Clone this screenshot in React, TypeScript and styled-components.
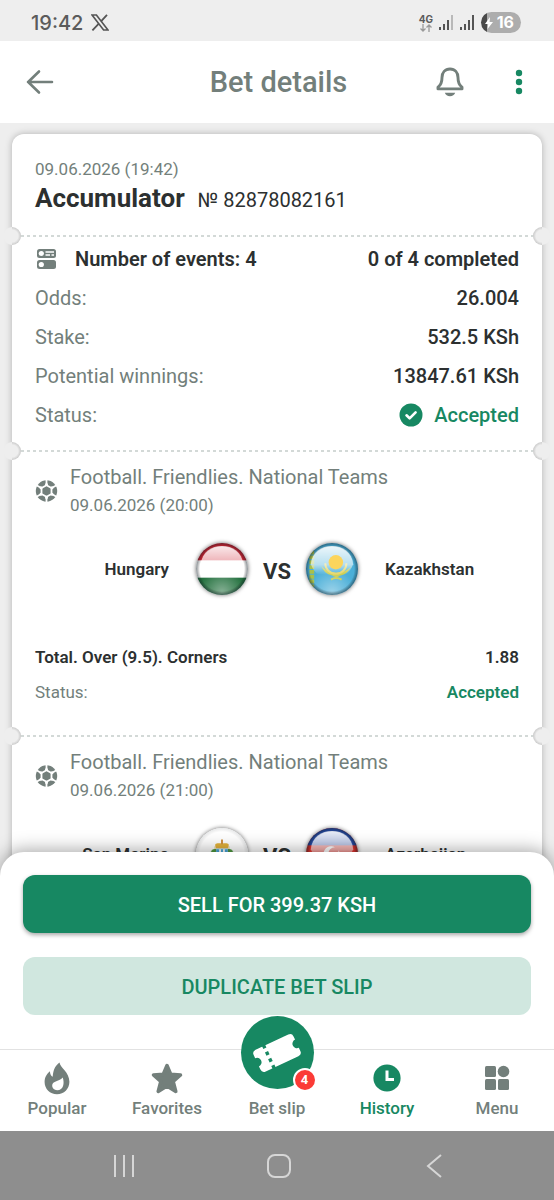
import React from 'react';
import styled, { createGlobalStyle } from 'styled-components';

const c = {
  green: '#178862',
  mint: '#d0e7df',
  grey: '#737f7b',
  ink: '#2c3030',
  page: '#eeeeee',
  line: '#d3d9d7',
};

const GlobalStyle = createGlobalStyle`
  *, *::before, *::after { box-sizing: border-box; }
  body { margin: 0; background: ${c.page}; font-family: Roboto, "Liberation Sans", sans-serif; color: ${c.ink}; }
  button { font: inherit; border: 0; padding: 0; background: none; color: inherit; cursor: pointer; }
  a { color: inherit; text-decoration: none; }
  h1, h2, p, dl, dd, dt { margin: 0; font: inherit; }
  svg { display: block; flex: none; }
`;

const Screen = styled.div`
  display: flex;
  flex-direction: column;
  height: 100vh;
  overflow: hidden;
`;

const StatusBar = styled.div`
  display: flex;
  align-items: center;
  justify-content: space-between;
  flex: none;
  height: 41px;
  padding: 4px 33px 0 31px;
  background: ${c.page};
  color: #5b5b5b;
`;

const StatusGroup = styled.div<{ $gap: number }>`
  display: flex;
  align-items: center;
  gap: ${(p) => p.$gap}px;
`;

const Clock = styled.span`
  font: 500 20px/24px Inter, Roboto, sans-serif;
`;

const Network = styled.span`
  display: flex;
  flex-direction: column;
  align-items: center;
  font: 700 10px/10px Inter, Roboto, sans-serif;
`;

const Battery = styled.span`
  display: flex;
  align-items: center;
  justify-content: flex-end;
  gap: 4px;
  width: 40px;
  height: 21px;
  padding-right: 7px;
  border-radius: 11px;
  background: linear-gradient(90deg, #4a4a4a 6px, #adadad 6px);
  color: #fff;
  font: 700 16px/21px Inter, Roboto, sans-serif;
`;

const Header = styled.header`
  display: grid;
  grid-template-columns: 1fr auto 1fr;
  align-items: center;
  flex: none;
  height: 82px;
  padding: 0 31px 0 26px;
  background: #fff;
  color: ${c.grey};
`;

const Title = styled.h1`
  font-size: 29px;
  line-height: 36px;
  font-weight: 500;
  padding-left: 8px;
`;

const HeaderActions = styled.div`
  display: flex;
  justify-content: flex-end;
  gap: 51px;
`;

const IconButton = styled.button`
  display: flex;
  align-items: center;
`;

const Scroll = styled.main`
  flex: 1 1 0;
  min-height: 0;
  overflow: hidden;
  padding: 11px 12px 0;
`;

const Ticket = styled.article`
  border-radius: 12px;
  background: #fff;
  box-shadow: 0 0 7px rgba(0, 0, 0, 0.26);
`;

const Section = styled.section<{ $pad: string }>`
  position: relative;
  padding: ${(p) => p.$pad};
  & + & {
    background: repeating-linear-gradient(90deg, ${c.line} 0 3px, transparent 3px 6px) 9px 0 / calc(100% - 18px) 2px no-repeat;
  }
`;

const Notch = styled.span<{ $side: 'left' | 'right' }>`
  position: absolute;
  top: -8px;
  ${(p) => p.$side}: -9px;
  width: 18px;
  height: 18px;
  border-radius: 50%;
  background:
    linear-gradient(${c.page}, ${c.page}) ${(p) => p.$side} / 9px 100% no-repeat,
    radial-gradient(circle, ${c.page} 6px, #c9c9c9 9px);
`;

const DateText = styled.p<{ $line: number }>`
  font-size: 17px;
  line-height: ${(p) => p.$line}px;
  color: ${c.grey};
`;

const BetHeading = styled.div`
  display: flex;
  align-items: baseline;
  gap: 13px;
  line-height: 34px;
`;

const BetType = styled.h2`
  font-size: 26px;
  font-weight: 700;
`;

const BetNumber = styled.p`
  font-size: 20px;
`;

const Rows = styled.dl``;

const Row = styled.div<{ $height: number; $size: number; $weight: number }>`
  display: flex;
  justify-content: space-between;
  align-items: center;
  height: ${(p) => p.$height}px;
  font-size: ${(p) => p.$size}px;
  --strong: ${(p) => p.$weight};
`;

const Label = styled.dt<{ $strong?: boolean }>`
  display: flex;
  align-items: center;
  gap: 17px;
  color: ${(p) => (p.$strong ? c.ink : c.grey)};
  font-weight: ${(p) => (p.$strong ? 'var(--strong)' : 400)};
`;

const Value = styled.dd<{ $accepted?: boolean }>`
  display: flex;
  align-items: center;
  gap: 11px;
  font-weight: var(--strong);
  color: ${(p) => (p.$accepted ? c.green : c.ink)};
`;

const EventHead = styled.div`
  display: flex;
  align-items: center;
  gap: 12px;
`;

const League = styled.h2`
  font-size: 20px;
  line-height: 28px;
  color: ${c.grey};
`;

const Match = styled.div`
  display: grid;
  grid-template-columns: 1fr auto 1fr;
  align-items: center;
  gap: 27px;
  height: 60px;
  margin: 20px 0 40px;
`;

const Team = styled.span<{ $home?: boolean }>`
  font-size: 17px;
  font-weight: 600;
  text-align: ${(p) => (p.$home ? 'right' : 'left')};
`;

const Versus = styled.div`
  display: flex;
  align-items: center;
  gap: 15px;
  font-size: 22px;
  font-weight: 700;
`;

const VersusText = styled.span`
  padding-top: 4px;
`;

const FlagDisc = styled.span`
  display: block;
  width: 52px;
  height: 52px;
  border-radius: 50%;
  overflow: hidden;
  box-shadow: 0 0 4px rgba(0, 0, 0, 0.6);
`;

const Sheet = styled.section`
  position: relative;
  flex: none;
  display: flex;
  flex-direction: column;
  gap: 24px;
  margin-top: -24px;
  padding: 23px 23px 34px;
  border-radius: 24px 24px 0 0;
  background: #fff;
  box-shadow: 0 -2px 18px rgba(0, 0, 0, 0.35);
`;

const Action = styled.button<{ $primary?: boolean }>`
  height: 58px;
  padding-top: 2px;
  border-radius: 12px;
  font-size: 20px;
  font-weight: 500;
  color: ${(p) => (p.$primary ? '#fff' : c.green)};
  background: ${(p) => (p.$primary ? c.green : c.mint)};
  box-shadow: ${(p) => (p.$primary ? '0 2px 4px rgba(0, 0, 0, 0.35)' : 'none')};
`;

const TabBar = styled.nav`
  position: relative;
  flex: none;
  display: grid;
  grid-template-columns: repeat(5, 1fr);
  grid-template-rows: minmax(0, 1fr);
  height: 82px;
  padding: 0 2px;
  border-top: 1px solid #e2e2e2;
  background: #fff;
`;

const Tab = styled.a<{ $active?: boolean }>`
  display: flex;
  flex-direction: column;
  align-items: center;
  justify-content: flex-end;
  gap: 2px;
  padding-bottom: 12px;
  font-size: 17px;
  line-height: 22px;
  font-weight: 500;
  color: ${(p) => (p.$active ? c.green : c.grey)};
`;

const TabIcon = styled.span`
  display: grid;
  place-items: center;
  height: 34px;
`;

const SlipDisc = styled.span`
  position: relative;
  display: grid;
  place-items: center;
  flex: none;
  width: 73px;
  height: 73px;
  margin-bottom: 6px;
  border-radius: 50%;
  background: ${c.green};
`;

const Badge = styled.span`
  position: absolute;
  right: -3px;
  bottom: -3px;
  width: 24px;
  height: 24px;
  border: 2px solid #fff;
  border-radius: 50%;
  background: #fb3b36;
  color: #fff;
  font-size: 13px;
  line-height: 20px;
  font-weight: 700;
  text-align: center;
`;

const SystemBar = styled.div`
  flex: none;
  display: flex;
  justify-content: space-between;
  align-items: center;
  height: 69px;
  padding: 0 112px;
  background: #8e8e8e;
`;

const Signal = ({ faded }: { faded?: boolean }) => (
  <svg width="15" height="16" viewBox="0 0 15 16" fill="#555">
    <rect x="0" y="12" width="2" height="3" />
    <rect x="4" y="9" width="2" height="6" />
    <rect x="8" y="5" width="2" height="10" />
    <rect x="12" y="0" width="2" height="15" opacity={faded ? 0.35 : 1} />
  </svg>
);

const XLogo = () => (
  <svg width="18" height="17" viewBox="0 0 18 17" fill="none" stroke="#555">
    <path d="M1 1h4.400L17 16h-4.400z" strokeWidth="1.700" />
    <path d="M16 .8 10 7.400M7.600 9.800 1.400 16.400" strokeWidth="1.800" />
  </svg>
);

const BackArrow = () => (
  <svg width="28" height="26" viewBox="0 0 28 26" fill="none" stroke={c.grey} strokeWidth="2.600" strokeLinecap="round" strokeLinejoin="round">
    <path d="M26 13H2M13 2.500 2.200 13 13 23.500" />
  </svg>
);

const Bell = () => (
  <svg width="28" height="30" viewBox="0 0 28 30" fill="none" stroke={c.grey} strokeWidth="2.900" strokeLinejoin="round">
    <path d="M14 2C9 2 6 5.700 6 10.500c0 4.500-.6 7.300-4 9.600v1.800h24v-1.800c-3.400-2.300-4-5.100-4-9.600C22 5.700 19 2 14 2z" />
    <path d="M8.800 25.800h10.400c-.9 2.300-2.600 3.500-5.200 3.500s-4.300-1.200-5.200-3.500z" fill={c.grey} stroke="none" />
  </svg>
);

const Dots = () => (
  <svg width="8" height="26" viewBox="0 0 8 26" fill={c.green}>
    <circle cx="4" cy="4" r="3.200" />
    <circle cx="4" cy="13" r="3.200" />
    <circle cx="4" cy="22" r="3.200" />
  </svg>
);

const EventsIcon = () => (
  <svg width="23" height="20" viewBox="0 0 23 20">
    <rect x="2" y="0" width="19" height="9" rx="2.500" fill={c.grey} />
    <rect x="2" y="11" width="19" height="9" rx="2.500" fill={c.grey} />
    <circle cx="6.300" cy="4.500" r="2.600" fill="#fff" />
    <circle cx="6.300" cy="15.500" r="2.600" fill="#fff" />
    <path d="M10.500 3H19M10.500 6H15M16.500 6H19" stroke="#fff" strokeWidth="1.400" />
  </svg>
);

const CheckIcon = () => (
  <svg width="24" height="24" viewBox="0 0 24 24">
    <circle cx="12" cy="12" r="11.500" fill={c.green} />
    <path d="m7.500 12.300 3.100 3 6-6" fill="none" stroke="#fff" strokeWidth="2.600" strokeLinecap="round" strokeLinejoin="round" />
  </svg>
);

const BallIcon = () => (
  <svg width="23" height="22" viewBox="0 0 23 22">
    <circle cx="11.500" cy="11" r="10.700" fill={c.grey} />
    <path
      d="M11.500 5.600V0M11.500 16.400V22M6.800 8.300 1 5M16.200 8.300 22 5M6.800 13.700 1 17M16.200 13.700 22 17"
      stroke="#fff"
      strokeWidth="1.800"
    />
    <path d="M11.500 5.200 16.500 8v6l-5 2.800L6.500 14V8z" fill={c.grey} stroke="#fff" strokeWidth="1.800" />
    <g fill="#fff">
      <circle cx="6" cy="7.800" r="1.500" />
      <circle cx="17" cy="7.800" r="1.500" />
      <circle cx="6" cy="14.200" r="1.500" />
      <circle cx="17" cy="14.200" r="1.500" />
      <circle cx="11.500" cy="4.600" r="1.500" />
      <circle cx="11.500" cy="17.400" r="1.500" />
    </g>
  </svg>
);

type FlagName = 'hungary' | 'kazakhstan' | 'sanMarino' | 'azerbaijan';

const flagArt: Record<FlagName, React.ReactNode> = {
  hungary: (
    <>
      <rect width="54" height="54" fill="#fff" />
      <rect width="54" height="18" fill="#cf2534" />
      <rect y="36" width="54" height="18" fill="#24713f" />
    </>
  ),
  kazakhstan: (
    <>
      <rect width="54" height="54" fill="#4bafd8" />
      <path d="M6 8v38" stroke="#a9c04a" strokeWidth="5" strokeDasharray="4 1" />
      <path d="M16 24c3 8 8 9 12 10 3 2 5 2 7 0 5-1 9-3 12-10-3 4-8 7-15 7s-12-3-16-7z" fill="#c9cb45" />
      <path d="M20 21a11 11 0 0 0 22 0" fill="none" stroke="#e3d35a" strokeWidth="2" />
      <path d="M26 38c3-2 7-2 11 0" fill="none" stroke="#c9cb45" strokeWidth="2" />
    </>
  ),
  sanMarino: (
    <>
      <rect width="54" height="54" fill="#fff" />
      <rect y="27" width="54" height="27" fill="#7ec3e8" />
      <path d="M17 22c-4 4-3 12 1 16l5-13zM37 22c4 4 3 12-1 16l-5-13z" fill="#3f8f3c" />
      <path d="M20 20h14v12l-7 8-7-8z" fill="#4aa9dd" stroke="#dba72d" strokeWidth="2" />
      <path d="M24 22v12M30 22v12" stroke="#fff" strokeWidth="2" />
    </>
  ),
  azerbaijan: (
    <>
      <rect width="54" height="54" fill="#e4352f" />
      <rect width="54" height="18" fill="#2a50b0" />
      <rect y="36" width="54" height="18" fill="#2f8d4b" />
    </>
  ),
};

const flagEmblem: Partial<Record<FlagName, React.ReactNode>> = {
  kazakhstan: <circle cx="31" cy="20" r="7.500" fill="#fcd55c" />,
  sanMarino: (
    <>
      <path d="M21 21c-3-6 1-5 6-5s9-1 6 5z" fill="#e3b23a" />
      <path d="M27 12v5" stroke="#d08f3d" strokeWidth="2" />
      <path d="M15 27c1-4 3-6 6-5l-1 8zM39 27c-1-4-3-6-6-5l1 8z" fill="#4f9a3f" />
      <path d="M21 22h12v8H21z" fill="#4aa9dd" />
      <path d="M25 22v8M29 22v8" stroke="#fff" strokeWidth="2" />
    </>
  ),
  azerbaijan: (
    <>
      <path d="M30 20a8 8 0 1 0 0 14 7 7 0 1 1 0-14z" fill="#fff" />
      <path d="m34 23 1 3 3-1-1 3 2 2-3 0-2 3-1-3-3-1 3-2z" fill="#fff" />
    </>
  ),
};

const Flag = ({ name }: { name: FlagName }) => (
  <FlagDisc>
    <svg width="52" height="52" viewBox="0 0 54 54" aria-hidden="true">
      <defs>
        <linearGradient id={`gloss-${name}`} x1="0" y1="0" x2="0" y2="1">
          <stop offset="0" stopColor="#fff" stopOpacity="0.900" />
          <stop offset="0.650" stopColor="#fff" stopOpacity="0.600" />
          <stop offset="1" stopColor="#fff" stopOpacity="0" />
        </linearGradient>
        <radialGradient id={`rim-${name}`}>
          <stop offset="0.850" stopColor="#000" stopOpacity="0" />
          <stop offset="1" stopColor="#10202a" stopOpacity={name === 'sanMarino' ? 0.1 : 0.5} />
        </radialGradient>
        <radialGradient id={`glow-${name}`} cx="0.500" cy="0.950" r="0.450">
          <stop offset="0" stopColor="#fff" stopOpacity="0.450" />
          <stop offset="1" stopColor="#fff" stopOpacity="0" />
        </radialGradient>
      </defs>
      {flagArt[name]}
      <path d="M5 22C6 9 16 3 27 3s21 6 22 19c-2 5-4 8-8 11H13c-4-3-6-6-8-11z" fill={`url(#gloss-${name})`} />
      <rect width="54" height="54" fill={`url(#glow-${name})`} />
      {flagEmblem[name]}
      <rect width="54" height="54" fill={`url(#rim-${name})`} />
    </svg>
  </FlagDisc>
);

const Flame = () => (
  <svg width="26" height="33" viewBox="0 0 26 33">
    <path d="M15.500.5c.8 5.500 9.900 9.500 9.900 19.300C25.400 27 20 32.300 13 32.300S.6 27 .6 20c0-5 2.400-8.300 5.300-10.800.2 2.800 1 4.800 2.800 5.500C9.300 9 10.500 4 15.500.5z" fill={c.grey} />
    <path d="M18.800 15.500c1.800 5.800.8 12.800-5.600 12.800-3.200 0-5-2.200-5-4.700 0-5.200 7.500-3.800 10.600-8.100z" fill="#fff" />
  </svg>
);

const Star = () => (
  <svg width="32" height="31" viewBox="0 0 32 31" fill={c.grey} stroke={c.grey} strokeWidth="3.500" strokeLinejoin="round">
    <path d="m16 2.500 3.700 8.700 9.800.8-7.300 6.400 2.600 10L16 23l-8.800 5.400 2.600-10L2.500 12l9.800-.8z" />
  </svg>
);

const SlipIcon = () => (
  <svg width="48" height="42" viewBox="0 0 48 42">
    <g transform="rotate(-25 24 21)">
      <path d="M6 9h36a4 4 0 0 1 4 4v3.500a4.500 4.500 0 0 0 0 9V29a4 4 0 0 1-4 4H6a4 4 0 0 1-4-4v-3.500a4.500 4.500 0 0 0 0-9V13a4 4 0 0 1 4-4z" fill="#fff" />
      <path d="M15 8v26" stroke={c.green} strokeWidth="3.400" strokeDasharray="3.600 3.850" />
    </g>
  </svg>
);

const HistoryIcon = () => (
  <svg width="28" height="28" viewBox="0 0 28 28">
    <circle cx="14" cy="14" r="13.600" fill={c.green} />
    <path d="M14 6.500V15.500h7" fill="none" stroke="#fff" strokeWidth="3" />
  </svg>
);

const MenuIcon = () => (
  <svg width="26" height="26" viewBox="0 0 26 26" fill={c.grey}>
    <rect x="1" y="1" width="11" height="11" rx="1.500" />
    <circle cx="19.500" cy="6.500" r="5.800" />
    <rect x="1" y="14" width="11" height="11" rx="1.500" />
    <rect x="14" y="14" width="11" height="11" rx="1.500" />
  </svg>
);

interface BetEvent {
  league: string;
  date: string;
  home: string;
  homeFlag: FlagName;
  away: string;
  awayFlag: FlagName;
  market?: string;
  odds?: string;
}

const events: BetEvent[] = [
  {
    league: 'Football. Friendlies. National Teams',
    date: '09.06.2026 (20:00)',
    home: 'Hungary',
    homeFlag: 'hungary',
    away: 'Kazakhstan',
    awayFlag: 'kazakhstan',
    market: 'Total. Over (9.5). Corners',
    odds: '1.88',
  },
  {
    league: 'Football. Friendlies. National Teams',
    date: '09.06.2026 (21:00)',
    home: 'San Marino',
    homeFlag: 'sanMarino',
    away: 'Azerbaijan',
    awayFlag: 'azerbaijan',
  },
];

const summary = [
  ['Odds:', '26.004'],
  ['Stake:', '532.5 KSh'],
  ['Potential winnings:', '13847.61 KSh'],
];

const Notches = () => (
  <>
    <Notch $side="left" />
    <Notch $side="right" />
  </>
);

const EventSection = ({ event }: { event: BetEvent }) => (
  <Section $pad="13px 23px 26px">
    <Notches />
    <EventHead>
      <BallIcon />
      <div>
        <League>{event.league}</League>
        <DateText $line={28}>{event.date}</DateText>
      </div>
    </EventHead>
    <Match>
      <Team $home>{event.home}</Team>
      <Versus>
        <Flag name={event.homeFlag} />
        <VersusText>VS</VersusText>
        <Flag name={event.awayFlag} />
      </Versus>
      <Team>{event.away}</Team>
    </Match>
    {event.market && (
      <Rows>
        <Row $height={35} $size={17} $weight={600}>
          <Label $strong>{event.market}</Label>
          <Value>{event.odds}</Value>
        </Row>
        <Row $height={35} $size={17} $weight={600}>
          <Label>Status:</Label>
          <Value $accepted>Accepted</Value>
        </Row>
      </Rows>
    )}
  </Section>
);

export default function App() {
  return (
    <Screen>
      <GlobalStyle />
      <StatusBar>
        <StatusGroup $gap={8}>
          <Clock>19:42</Clock>
          <XLogo />
        </StatusGroup>
        <StatusGroup $gap={6}>
          <Network>
            4G
            <svg width="12" height="8" viewBox="0 0 12 8" fill="none" stroke="#9a9a9a" strokeWidth="1.300">
              <path d="M3 0v7M.5 4.500 3 7l2.500-2.500M9 8V1M6.500 3.500 9 1l2.500 2.500" />
            </svg>
          </Network>
          <Signal faded />
          <Signal />
          <Battery>
            <svg width="8" height="12" viewBox="0 0 8 12" fill="#fff">
              <path d="M5 0 0 7h3.200L2.500 12 8 5H4.600z" />
            </svg>
            16
          </Battery>
        </StatusGroup>
      </StatusBar>

      <Header>
        <IconButton aria-label="Back">
          <BackArrow />
        </IconButton>
        <Title>Bet details</Title>
        <HeaderActions>
          <IconButton aria-label="Notifications">
            <Bell />
          </IconButton>
          <IconButton aria-label="More options">
            <Dots />
          </IconButton>
        </HeaderActions>
      </Header>

      <Scroll>
        <Ticket>
          <Section $pad="23px 23px 18px">
            <DateText $line={24}>09.06.2026 (19:42)</DateText>
            <BetHeading>
              <BetType>Accumulator</BetType>
              <BetNumber>№ 82878082161</BetNumber>
            </BetHeading>
          </Section>

          <Section $pad="4px 23px 16px">
            <Notches />
            <Rows>
              <Row $height={39} $size={20} $weight={600}>
                <Label $strong>
                  <EventsIcon />
                  Number of events: 4
                </Label>
                <Value>0 of 4 completed</Value>
              </Row>
              {summary.map(([label, value]) => (
                <Row key={label} $height={39} $size={20} $weight={500}>
                  <Label>{label}</Label>
                  <Value>{value}</Value>
                </Row>
              ))}
              <Row $height={39} $size={20} $weight={500}>
                <Label>Status:</Label>
                <Value $accepted>
                  <CheckIcon />
                  Accepted
                </Value>
              </Row>
            </Rows>
          </Section>

          {events.map((event) => (
            <EventSection key={event.home} event={event} />
          ))}
        </Ticket>
      </Scroll>

      <Sheet>
        <Action $primary>SELL FOR 399.37 KSH</Action>
        <Action>DUPLICATE BET SLIP</Action>
      </Sheet>

      <TabBar>
        <Tab href="#popular">
          <TabIcon>
            <Flame />
          </TabIcon>
          Popular
        </Tab>
        <Tab href="#favorites">
          <TabIcon>
            <Star />
          </TabIcon>
          Favorites
        </Tab>
        <Tab href="#slip">
          <SlipDisc>
            <SlipIcon />
            <Badge>4</Badge>
          </SlipDisc>
          Bet slip
        </Tab>
        <Tab href="#history" $active>
          <TabIcon>
            <HistoryIcon />
          </TabIcon>
          History
        </Tab>
        <Tab href="#menu">
          <TabIcon>
            <MenuIcon />
          </TabIcon>
          Menu
        </Tab>
      </TabBar>

      <SystemBar>
        <IconButton aria-label="Recent apps">
          <svg width="24" height="24" viewBox="0 0 24 24" stroke="#d6d6d6" strokeWidth="2">
            <path d="M3 1v22M12 1v22M21 1v22" />
          </svg>
        </IconButton>
        <IconButton aria-label="Home">
          <svg width="24" height="24" viewBox="0 0 24 24" fill="none" stroke="#d6d6d6" strokeWidth="2">
            <rect x="1" y="1" width="22" height="22" rx="7" />
          </svg>
        </IconButton>
        <IconButton aria-label="Go back">
          <svg width="20" height="24" viewBox="0 0 20 24" fill="none" stroke="#d6d6d6" strokeWidth="2">
            <path d="M19 1 6 12l13 11" />
          </svg>
        </IconButton>
      </SystemBar>
    </Screen>
  );
}
